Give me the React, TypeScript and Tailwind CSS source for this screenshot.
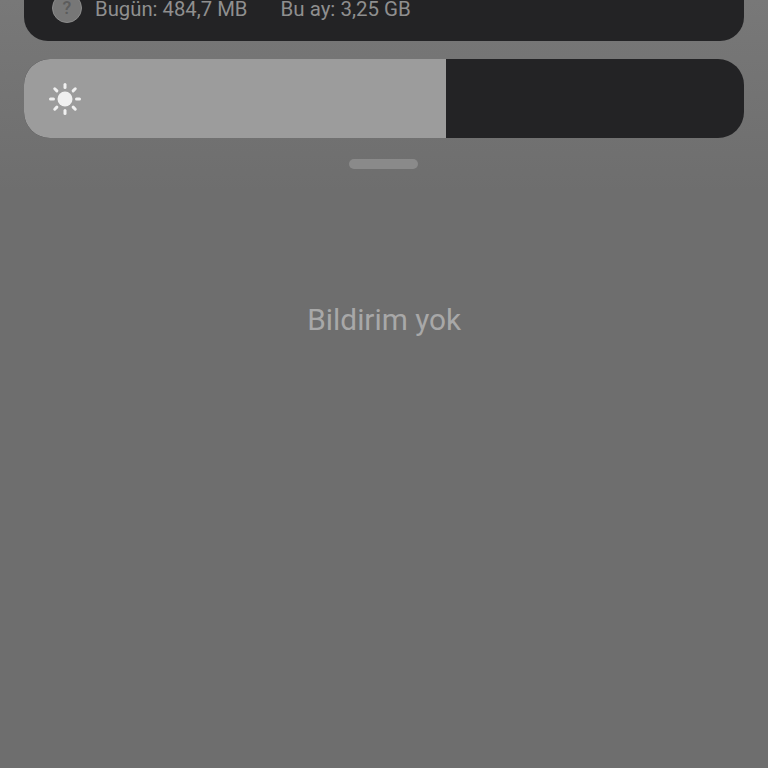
function SunIcon() {
  const rays = [0, 45, 90, 135, 180, 225, 270, 315];
  return (
    <svg width="34" height="34" viewBox="0 0 34 34">
      <circle cx="17" cy="17" r="7.5" fill="#f0f0f0" />
      {rays.map((r) => (
        <line key={r} x1="17" y1="2.5" x2="17" y2="5.5" stroke="#f0f0f0" strokeWidth="3" strokeLinecap="round" transform={`rotate(${r} 17 17)`} />
      ))}
    </svg>
  );
}

export default function App() {
  return (
    <div className="w-[768px] h-[768px] overflow-hidden bg-linear-to-b from-[#787878] to-[#6e6e6e] to-[25%] pl-[23.5px] pr-[24px] font-['Roboto',sans-serif]">
      <div className="h-[41px] bg-[#232325] rounded-b-[24px] flex items-start pl-[28.5px] overflow-hidden">
        <div className="w-[30px] h-[30px] shrink-0 mt-[-7px] rounded-full bg-[#777777] border border-[#8c8c8c] flex items-center justify-center text-[#5c5c5c] text-[18px] font-medium leading-none">?</div>
        <span className="ml-[13px] mt-[-3px] text-[20.3px] leading-[24px] text-[#8f8f8f] whitespace-nowrap">Bugün: 484,7 MB</span>
        <span className="ml-[33px] mt-[-3px] text-[20.5px] leading-[24px] text-[#8f8f8f] whitespace-nowrap">Bu ay: 3,25 GB</span>
      </div>
      <div className="mt-[18px] h-[79px] rounded-[26px] bg-[#232325] overflow-hidden">
        <div className="h-full w-[422.5px] bg-[#9c9c9c] flex items-center pl-[24px]">
          <SunIcon />
        </div>
      </div>
      <div className="mt-[21px] ml-[325.5px] w-[69px] h-[10px] rounded-full bg-[#8a8a8a]" />
      <p className="mt-[134px] ml-[1px] text-center text-[29.8px] leading-[34px] text-[#a8a8a8]">Bildirim yok</p>
    </div>
  );
}
